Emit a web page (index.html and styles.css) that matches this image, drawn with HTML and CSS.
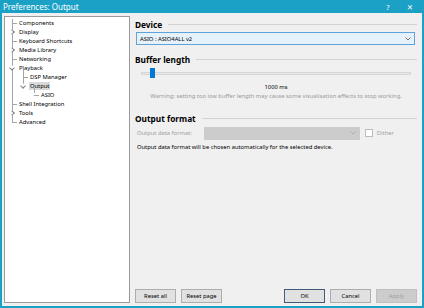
FILE: index.html
```html
<!DOCTYPE html>
<html lang="en">
<head>
    <meta charset="UTF-8">
    <title>Preferences: Output</title>
    <link rel="stylesheet" href="styles.css">
</head>
<body>
    <div class="window">
        <!-- title bar -->
        <div class="titlebar">
            <span class="title">Preferences: Output</span>
            <span class="tb-btn">?</span>
            <span class="tb-btn">✕</span>
        </div>

        <div class="content">
            <!-- page tree -->
            <div class="tree">
                <ul class="nodes">
                    <li><span class="label">Components</span></li>
                    <li class="closed"><span class="label">Display</span></li>
                    <li><span class="label">Keyboard Shortcuts</span></li>
                    <li class="closed"><span class="label">Media Library</span></li>
                    <li><span class="label">Networking</span></li>
                    <li class="open"><span class="label">Playback</span>
                        <ul>
                            <li><span class="label">DSP Manager</span></li>
                            <li class="open last"><span class="label selected">Output</span>
                                <ul>
                                    <li class="last"><span class="label">ASIO</span></li>
                                </ul>
                            </li>
                        </ul>
                    </li>
                    <li><span class="label">Shell Integration</span></li>
                    <li class="closed"><span class="label">Tools</span></li>
                    <li class="last"><span class="label">Advanced</span></li>
                </ul>
            </div>

            <!-- settings page -->
            <div class="page">
                <div class="group device">
                    <div class="heading">Device</div>
                    <div class="combo">
                        <span>ASIO : ASIO4ALL v2</span>
                        <svg width="6" height="4" viewBox="0 0 6 4"><path d="M0.5 0.5 L3 3 L5.5 0.5" fill="none" stroke="#555" stroke-width="0.8"/></svg>
                    </div>
                </div>

                <div class="group buffer">
                    <div class="heading">Buffer length</div>
                    <div class="slider">
                        <div class="track"></div>
                        <div class="thumb"></div>
                    </div>
                    <div class="value">1000 ms</div>
                    <div class="warning">Warning: setting too low buffer length may cause some visualisation effects to stop working.</div>
                </div>

                <div class="group">
                    <div class="heading">Output format</div>
                    <div class="format-row">
                        <span class="muted">Output data format:</span>
                        <div class="combo disabled">
                            <svg width="6" height="4" viewBox="0 0 6 4"><path d="M0.5 0.5 L3 3 L5.5 0.5" fill="none" stroke="#a8a8a8" stroke-width="0.8"/></svg>
                        </div>
                        <span class="check"></span>
                        <span class="muted">Dither</span>
                    </div>
                    <div class="note">Output data format will be chosen automatically for the selected device.</div>
                </div>

                <div class="footer">
                    <button class="btn">Reset all</button>
                    <button class="btn">Reset page</button>
                    <span class="spacer"></span>
                    <button class="btn default">OK</button>
                    <button class="btn">Cancel</button>
                    <button class="btn" disabled>Apply</button>
                </div>
            </div>
        </div>
    </div>
</body>
</html>
```

FILE: styles.css
```css
body {
    margin: 0;
    font-family: 'Noto Sans', 'DejaVu Sans', sans-serif;
    font-size: 5.8px;
    color: #000;
}

.window {
    width: 424px;
    height: 308px;
    box-sizing: border-box;
    display: flex;
    flex-direction: column;
    background: #f0f0f0;
    border: 2px solid #1ba1c6;
    border-top: none;
}

.titlebar {
    height: 13px;
    margin: 0 -2px;
    padding: 0 3px;
    background: #1ba1c6;
    color: #fff;
    display: flex;
    align-items: center;
    font-size: 8px;
}

.title {
    flex: 1;
}

.tb-btn {
    width: 22px;
    text-align: center;
    font-size: 7.5px;
}

.content {
    flex: 1;
    display: flex;
    padding: 3px 2px 3px 2px;
    gap: 5px;
}

/* tree */
.tree {
    width: 124px;
    background: #fff;
    border: 1px solid #9a9a9a;
    padding-top: 2px;
}

.tree ul {
    list-style: none;
    margin: 0;
    padding: 0;
}

.nodes {
    margin-left: 7px !important;
}

.tree ul ul {
    margin-left: 5px;
}

.tree li {
    position: relative;
    padding-left: 6px;
    line-height: 9px;
}

.tree li::before {
    content: '';
    position: absolute;
    left: 0;
    top: 4px;
    width: 5px;
    border-top: 1px solid #a5a5a5;
}

.tree li::after {
    content: '';
    position: absolute;
    left: 0;
    top: 0;
    bottom: 0;
    border-left: 1px solid #a5a5a5;
}

.tree li.last::after {
    bottom: auto;
    height: 5px;
}

.tree li.closed::before,
.tree li.open::before {
    content: '';
    border: none;
    width: 3px;
    height: 3px;
    left: -2px;
    top: 2px;
    border-right: 1px solid #808080;
    border-bottom: 1px solid #808080;
    background: #fff;
    z-index: 1;
}

.tree li.closed::before {
    transform: rotate(-45deg);
}

.tree li.open::before {
    transform: rotate(45deg);
    top: 1.5px;
}

.tree li.open > ul > li:first-child::after {
    top: -3px;
}

.label {
    padding: 0 1px;
}

.label.selected {
    background: #d9d9d9;
}

/* page */
.page {
    flex: 1;
    display: flex;
    flex-direction: column;
    padding-top: 2px;
    padding-right: 3px;
}

.heading {
    display: flex;
    align-items: center;
    gap: 6px;
    font-size: 8.3px;
    font-weight: bold;
    height: 12px;
}

.heading::after {
    content: '';
    flex: 1;
    border-top: 1px solid #d3d3d3;
}

.combo {
    height: 11px;
    margin: 2px 2px 0 1px;
    border: 1px solid #5ea3d9;
    background: #e5f1fb;
    display: flex;
    align-items: center;
    padding: 0 3px;
}

.combo span {
    flex: 1;
}

.combo.disabled {
    width: 148px;
    margin: 0;
    justify-content: flex-end;
    border-color: #cccccc;
    background: #cccccc;
}

.group {
    margin-bottom: 9px;
}

.group.device {
    margin-bottom: 8px;
}

.group.buffer {
    margin-bottom: 11px;
}

.slider {
    position: relative;
    height: 12px;
    margin: 2px 6px 0 6px;
}

.track {
    position: absolute;
    left: 0;
    right: 0;
    top: 5px;
    height: 1px;
    background: #e7eaea;
    border: 1px solid #d6d6d6;
}

.thumb {
    position: absolute;
    left: 9px;
    top: 1px;
    width: 5px;
    height: 10px;
    background: #0078d7;
}

.value {
    text-align: center;
    margin-top: 4px;
    line-height: 8px;
}

.warning {
    text-align: center;
    color: #9a9a9a;
    line-height: 10px;
}

.format-row {
    display: flex;
    align-items: center;
    gap: 4px;
    margin-top: 3px;
    height: 12px;
    padding-left: 2px;
}

.muted {
    color: #a0a0a0;
}

.format-row .combo.disabled {
    margin-left: 8px;
    margin-right: 1px;
}

.check {
    width: 6px;
    height: 6px;
    border: 1px solid #bcbcbc;
    background: #fff;
}

.note {
    margin-top: 4px;
    padding-left: 2px;
}

.footer {
    margin-top: auto;
    display: flex;
    gap: 5px;
    padding-bottom: 0;
}

.spacer {
    flex: 1;
}

.btn {
    width: 41px;
    height: 14px;
    padding: 0;
    font-family: inherit;
    font-size: 5.8px;
    background: #e1e1e1;
    border: 1px solid #adadad;
    color: #000;
}

.btn.default {
    border-color: #3d5a78;
}

.btn:disabled {
    background: #cccccc;
    border-color: #bfbfbf;
    color: #a0a0a0;
}
```
